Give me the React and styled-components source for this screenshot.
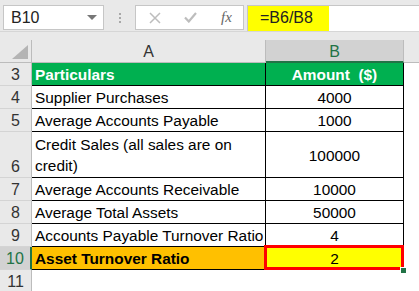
import React from "react";
import styled, { createGlobalStyle } from "styled-components";

const Global = createGlobalStyle`
  html, body {
    margin: 0;
    padding: 0;
    background: #ffffff;
  }
  body {
    width: 419px;
    height: 291px;
    overflow: hidden;
    font-family: "Liberation Sans", Arial, sans-serif;
  }
`;

const Top = styled.div`
  height: 40px;
  background: #e9e9e9;
  box-sizing: border-box;
  padding-top: 5px;
`;

const Toolbar = styled.div`
  display: flex;
  align-items: flex-start;
  height: 26px;
  border-bottom: 1px solid #d6d6d6;
`;

const NameBox = styled.div`
  margin-left: 3px;
  width: 101px;
  height: 25px;
  box-sizing: border-box;
  background: #fff;
  border: 1px solid #c6c6c6;
  display: flex;
  align-items: center;
  justify-content: space-between;
  padding: 0 6px 0 7px;
  font-size: 16px;
  color: #222;
`;

const Caret = styled.span`
  width: 0;
  height: 0;
  border-left: 5px solid transparent;
  border-right: 5px solid transparent;
  border-top: 5px solid #777;
`;

const Dots = styled.div`
  width: 31px;
  display: flex;
  flex-direction: column;
  align-items: center;
  gap: 2px;
  padding-top: 8px;
  span {
    width: 2px;
    height: 2px;
    background: #a8a8a8;
  }
`;

const FxBox = styled.div`
  width: 109px;
  height: 25px;
  box-sizing: border-box;
  background: #fff;
  border: 1px solid #c6c6c6;
  display: flex;
  align-items: center;
  padding-left: 13px;
  color: #bdbdbd;
`;

const Fx = styled.span`
  font-family: "Liberation Serif", "Times New Roman", serif;
  font-style: italic;
  font-size: 15px;
  color: #666;
  margin-left: 24px;
`;

const Formula = styled.div`
  flex: 1;
  margin-left: 3px;
  height: 26px;
  box-sizing: border-box;
  background: #fff;
  border-top: 1px solid #c6c6c6;
  border-left: 1px solid #c6c6c6;
  display: flex;
`;

const FormulaText = styled.div`
  width: 81px;
  background: #ffff00;
  box-sizing: border-box;
  padding-left: 12px;
  font-size: 16px;
  line-height: 24px;
  color: #222;
`;

const Row = styled.div`
  display: grid;
  grid-template-columns: 32px 234px 138px 1fr;
  height: ${(p) => p.$h || 23}px;
`;

const Corner = styled.div`
  background: #e9e9e9;
  border-right: 1px solid #bcbcbc;
  border-bottom: 1px solid #bcbcbc;
  box-sizing: border-box;
  display: flex;
  align-items: flex-end;
  justify-content: flex-end;
  padding: 0 3px 3px 0;
`;

const Triangle = styled.span`
  width: 0;
  height: 0;
  border-left: 16px solid transparent;
  border-bottom: 14px solid #b4b4b4;
`;

const ColHead = styled.div`
  background: ${(p) => (p.$active ? "#d2d2d2" : "#e9e9e9")};
  color: ${(p) => (p.$active ? "#217346" : "#333")};
  border-right: 1px solid #bcbcbc;
  border-bottom: ${(p) => (p.$active ? "2px solid #217346" : "1px solid #bcbcbc")};
  box-sizing: border-box;
  display: flex;
  align-items: center;
  justify-content: center;
  font-size: 16px;
  padding-top: 2px;
`;

const HeadFill = styled.div`
  background: #e9e9e9;
  border-bottom: 1px solid #bcbcbc;
`;

const RowHead = styled.div`
  background: ${(p) => (p.$active ? "#d2d2d2" : "#e9e9e9")};
  color: ${(p) => (p.$active ? "#217346" : "#333")};
  border-right: ${(p) => (p.$active ? "2px solid #217346" : "1px solid #bcbcbc")};
  border-bottom: 1px solid #d4d4d4;
  box-sizing: border-box;
  display: flex;
  align-items: flex-end;
  justify-content: center;
  padding-bottom: 1px;
  font-size: 16px;
`;

const Cell = styled.div`
  position: relative;
  box-sizing: border-box;
  border-right: 1px solid #000;
  border-bottom: 1px solid #000;
  background: ${(p) => p.$bg || "#fff"};
  color: ${(p) => p.$color || "#000"};
  font-weight: ${(p) => (p.$bold ? 700 : 400)};
  font-size: 15.4px;
  line-height: 21px;
  display: flex;
  align-items: center;
  justify-content: ${(p) => (p.$center ? "center" : "flex-start")};
  padding: 1px 3px 0;
  white-space: pre;
`;

const Blank = styled.div`
  background: #fff;
`;

const Frame = styled.div`
  position: absolute;
  inset: -2px -1px -1px -2px;
  border: 3px solid #ff0000;
  pointer-events: none;
`;

const Handle = styled.div`
  position: absolute;
  right: -4px;
  bottom: -5px;
  width: 5px;
  height: 5px;
  background: #217346;
  border: 1px solid #fff;
`;

const rows = [
  { n: 4, label: "Supplier Purchases", value: "4000" },
  { n: 5, label: "Average Accounts Payable", value: "1000" },
  { n: 6, label: "Credit Sales (all sales are on\ncredit)", value: "100000", h: 46 },
  { n: 7, label: "Average Accounts Receivable", value: "10000" },
  { n: 8, label: "Average Total Assets", value: "50000" },
  { n: 9, label: "Accounts Payable Turnover Ratio", value: "4" },
];

export default function App() {
  return (
    <>
      <Global />
      <Top>
        <Toolbar>
          <NameBox>
            B10
            <Caret />
          </NameBox>
          <Dots>
            <span />
            <span />
            <span />
          </Dots>
          <FxBox>
            <svg width="12" height="12" viewBox="0 0 12 12">
              <path d="M1 1L11 11M11 1L1 11" stroke="#bdbdbd" strokeWidth="1.5" />
            </svg>
            <svg width="13" height="11" viewBox="0 0 13 11" style={{ marginLeft: 23 }}>
              <path d="M1 5.5L4.8 9.5L12 1" stroke="#bdbdbd" strokeWidth="2.2" fill="none" />
            </svg>
            <Fx>fx</Fx>
          </FxBox>
          <Formula>
            <FormulaText>=B6/B8</FormulaText>
          </Formula>
        </Toolbar>
      </Top>

      <Row>
        <Corner>
          <Triangle />
        </Corner>
        <ColHead>A</ColHead>
        <ColHead $active>B</ColHead>
        <HeadFill />
      </Row>

      <Row>
        <RowHead>3</RowHead>
        <Cell $bg="#00b050" $color="#fff" $bold>
          Particulars
        </Cell>
        <Cell $bg="#00b050" $color="#fff" $bold $center>
          {"Amount  ($)"}
        </Cell>
        <Blank />
      </Row>

      {rows.map((r) => (
        <Row key={r.n} $h={r.h}>
          <RowHead>{r.n}</RowHead>
          <Cell>{r.label}</Cell>
          <Cell $center>{r.value}</Cell>
          <Blank />
        </Row>
      ))}

      <Row>
        <RowHead $active>10</RowHead>
        <Cell $bg="#ffc000" $bold>
          Asset Turnover Ratio
        </Cell>
        <Cell $bg="#ffff00" $center>
          2
          <Frame />
          <Handle />
        </Cell>
        <Blank />
      </Row>

      <Row>
        <RowHead>11</RowHead>
        <Blank />
        <Blank />
        <Blank />
      </Row>
    </>
  );
}
